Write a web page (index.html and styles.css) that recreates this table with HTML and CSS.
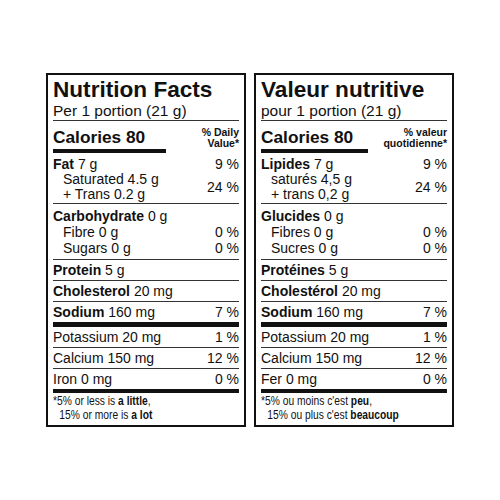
FILE: index.html
```html
<!DOCTYPE html>
<html lang="en">
<head>
<meta charset="utf-8">
<title>Nutrition Facts</title>
<link rel="stylesheet" href="styles.css">
</head>
<body>
<div class="labels">
  <section class="label">
    <h1 class="title">Nutrition Facts</h1>
    <div class="serving">Per 1 portion (21 g)</div>
    <div class="cal-row">
      <div class="cal-main">
        <div class="cal">Calories 80</div>
        <div class="cal-bar cal-bar--en"></div>
      </div>
      <div class="dv">% Daily<br>Value*</div>
    </div>
    <div class="fat-group">
      <span class="name"><b>Fat</b> 7 g</span><span class="pct">9 %</span>
      <span class="name sub">Saturated 4.5 g</span><span class="pct pct--span">24 %</span>
      <span class="name sub">+ Trans 0.2 g</span>
    </div>
    <div class="group">
      <div class="gline"><span><b>Carbohydrate</b> 0 g</span><span></span></div>
      <div class="gline"><span class="sub">Fibre 0 g</span><span>0 %</span></div>
      <div class="gline"><span class="sub">Sugars 0 g</span><span>0 %</span></div>
    </div>
    <div class="row"><span><b>Protein</b> 5 g</span><span></span></div>
    <div class="row"><span><b>Cholesterol</b> 20 mg</span><span></span></div>
    <div class="row row--thick"><span><b>Sodium</b> 160 mg</span><span>7 %</span></div>
    <div class="row"><span>Potassium 20 mg</span><span>1 %</span></div>
    <div class="row"><span>Calcium 150 mg</span><span>12 %</span></div>
    <div class="row row--end"><span>Iron 0 mg</span><span>0 %</span></div>
    <div class="foot">
      <div class="foot-line">*5% or less is <b>a little</b>,</div>
      <div class="foot-line foot-indent">15% or more is <b>a lot</b></div>
    </div>
  </section>

  <section class="label">
    <h1 class="title">Valeur nutritive</h1>
    <div class="serving">pour 1 portion (21 g)</div>
    <div class="cal-row">
      <div class="cal-main">
        <div class="cal">Calories 80</div>
        <div class="cal-bar cal-bar--fr"></div>
      </div>
      <div class="dv">% valeur<br>quotidienne*</div>
    </div>
    <div class="fat-group">
      <span class="name"><b>Lipides</b> 7 g</span><span class="pct">9 %</span>
      <span class="name sub">saturés 4,5 g</span><span class="pct pct--span">24 %</span>
      <span class="name sub">+ trans 0,2 g</span>
    </div>
    <div class="group">
      <div class="gline"><span><b>Glucides</b> 0 g</span><span></span></div>
      <div class="gline"><span class="sub">Fibres 0 g</span><span>0 %</span></div>
      <div class="gline"><span class="sub">Sucres 0 g</span><span>0 %</span></div>
    </div>
    <div class="row"><span><b>Protéines</b> 5 g</span><span></span></div>
    <div class="row"><span><b>Cholestérol</b> 20 mg</span><span></span></div>
    <div class="row row--thick"><span><b>Sodium</b> 160 mg</span><span>7 %</span></div>
    <div class="row"><span>Potassium 20 mg</span><span>1 %</span></div>
    <div class="row"><span>Calcium 150 mg</span><span>12 %</span></div>
    <div class="row row--end"><span>Fer 0 mg</span><span>0 %</span></div>
    <div class="foot">
      <div class="foot-line">*5% ou moins c'est <b>peu</b>,</div>
      <div class="foot-line foot-indent">15% ou plus c'est <b>beaucoup</b></div>
    </div>
  </section>
</div>
</body>
</html>
```

FILE: styles.css
```css
* {
  box-sizing: border-box;
  margin: 0;
  padding: 0;
}

html,
body {
  width: 500px;
  height: 500px;
  background: #fff;
}

body {
  font-family: "Liberation Sans", Arial, sans-serif;
  color: #111;
  display: flex;
  align-items: center;
  justify-content: center;
}

.labels {
  display: flex;
  gap: 8px;
}

.label {
  width: 200px;
  border: 2px solid #111;
  padding: 3px 5px 0;
  display: flex;
  flex-direction: column;
}

.title {
  font-size: 22.6px;
  font-weight: bold;
  line-height: 24px;
}

.serving {
  font-size: 15.5px;
  line-height: 18px;
  border-bottom: 1px solid #333;
}

.cal-row {
  display: flex;
  justify-content: space-between;
  padding-top: 6px;
}

.cal {
  font-size: 17.3px;
  font-weight: bold;
  line-height: 20px;
}

.cal-bar {
  margin-top: 2px;
  height: 4px;
  background: #111;
}

.cal-bar--en {
  width: 113px;
}

.cal-bar--fr {
  width: 107px;
}

.dv {
  font-size: 10.5px;
  font-weight: bold;
  line-height: 11px;
  text-align: right;
}

.fat-group {
  display: grid;
  grid-template-columns: 1fr auto;
  grid-auto-rows: 15px;
  font-size: 14px;
  line-height: 15px;
  padding: 4px 0 1px;
  border-bottom: 1px solid #333;
}

.pct {
  text-align: right;
}

.pct--span {
  grid-row: span 2;
  align-self: center;
}

.sub {
  padding-left: 10px;
}

.group {
  font-size: 14px;
  line-height: 16px;
  padding: 4px 0 3px;
  border-bottom: 1px solid #333;
}

.gline,
.row {
  display: flex;
  justify-content: space-between;
}

.row {
  font-size: 14px;
  line-height: 20px;
  border-bottom: 1px solid #333;
}

.row--thick {
  border-bottom: 5px solid #111;
}

.row--end {
  border-bottom: 4px solid #111;
}

.foot {
  font-size: 13px;
  line-height: 14px;
  padding: 1px 0 3px;
}

.foot-line {
  white-space: nowrap;
  transform: scaleX(0.79);
  transform-origin: left center;
}

.foot-indent {
  padding-left: 8px;
}
```
